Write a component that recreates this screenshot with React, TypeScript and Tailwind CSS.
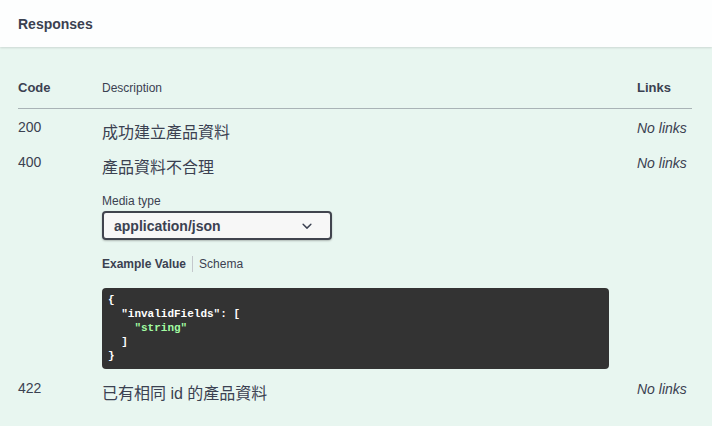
const sans = "font-['Liberation_Sans','Noto_Sans_CJK_TC',sans-serif]";

type Row = {
  code: string;
  description: string;
};

function Chevron() {
  return (
    <svg width="20" height="20" viewBox="0 0 20 20" className="text-[#3b4151]">
      <path
        fill="currentColor"
        d="M13.418 7.859a.695.695 0 0 1 .978 0 .68.68 0 0 1 0 .969l-3.908 3.83a.697.697 0 0 1-.979 0l-3.908-3.83a.68.68 0 0 1 0-.969.695.695 0 0 1 .978 0L10 11l3.418-3.141z"
      />
    </svg>
  );
}

function NoLinks() {
  return <span className="text-sm italic leading-5">No links</span>;
}

function ExampleBlock() {
  return (
    <div className="mt-4 mr-[28px] rounded bg-[#333333] pl-[6px] pt-[5px] pb-[6px] font-['Liberation_Mono',monospace] text-[11px] font-bold leading-[14px] text-white whitespace-pre">
      <div>{"{"}</div>
      <div>{'  "invalidFields": ['}</div>
      <div>
        {"    "}
        <span className="text-[#a2fca2]">"string"</span>
      </div>
      <div>{"  ]"}</div>
      <div>{"}"}</div>
    </div>
  );
}

function ResponseRow({ code, description, children }: Row & { children?: React.ReactNode }) {
  return (
    <div className="flex">
      <div className="w-[84px] text-sm leading-5">{code}</div>
      <div className="flex-1">
        <p className="mt-1 text-base leading-6">{description}</p>
        {children}
      </div>
      <div className="w-[55px] -mt-px">
        <NoLinks />
      </div>
    </div>
  );
}

export default function App() {
  return (
    <div className={`${sans} h-[426px] w-[712px] overflow-hidden bg-[#e8f6f0] text-[#3b4151]`}>
      <div className="flex h-[47px] items-center bg-[#fdfefe] px-[18px] shadow-[0_1px_2px_rgba(0,0,0,0.12)]">
        <h4 className="text-sm font-bold">Responses</h4>
      </div>

      <div className="pl-[18px] pr-[20px] pt-[31px]">
        <div className="flex items-center border-b border-[#a9b3b6] pb-[10px]">
          <div className="w-[84px] text-[13px] font-bold leading-5">Code</div>
          <div className="flex-1 text-xs leading-5">Description</div>
          <div className="w-[55px] text-[13px] font-bold leading-5">Links</div>
        </div>

        <div className="flex flex-col">
          <div className="pt-[8px]">
            <ResponseRow code="200" description="成功建立產品資料" />
          </div>
          <div className="pt-[7px]">
            <ResponseRow code="400" description="產品資料不合理">
              <div className="mt-[13px] text-xs leading-4">Media type</div>
              <div className="mt-[2px] flex h-[29px] w-[230px] items-center justify-between rounded border-2 border-[#41444e] bg-[#f7f7f7] pl-[10px] pr-[13px] shadow-[0_1px_2px_rgba(0,0,0,0.25)]">
                <span className="text-sm font-bold">application/json</span>
                <Chevron />
              </div>
              <div className="mt-4 flex items-center text-xs leading-4">
                <span className="font-bold">Example Value</span>
                <span className="mx-[6px] h-4 w-px bg-[#c4c8cc]" />
                <span>Schema</span>
              </div>
              <ExampleBlock />
            </ResponseRow>
          </div>
          <div className="pt-[9px]">
            <ResponseRow code="422" description="已有相同 id 的產品資料" />
          </div>
        </div>
      </div>
    </div>
  );
}
